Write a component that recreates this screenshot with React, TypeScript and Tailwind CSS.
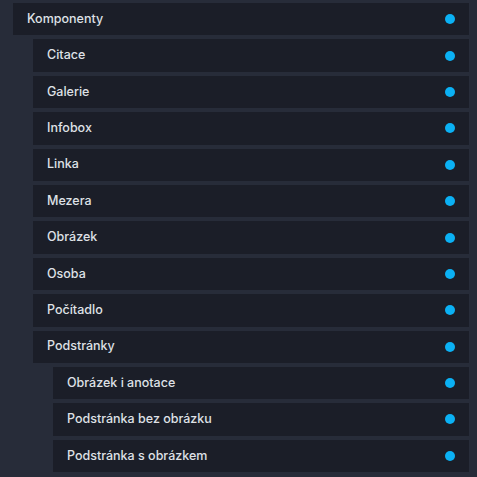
type Node = { label: string; children?: Node[] };

const tree: Node = {
  label: 'Komponenty',
  children: [
    { label: 'Citace' },
    { label: 'Galerie' },
    { label: 'Infobox' },
    { label: 'Linka' },
    { label: 'Mezera' },
    { label: 'Obrázek' },
    { label: 'Osoba' },
    { label: 'Počítadlo' },
    {
      label: 'Podstránky',
      children: [
        { label: 'Obrázek i anotace' },
        { label: 'Podstránka bez obrázku' },
        { label: 'Podstránka s obrázkem' },
      ],
    },
  ],
};

const TreeItem = ({ node }: { node: Node }) => (
  <div className="flex flex-col gap-[4px]">
    <div className="flex h-[32.4px] items-center justify-between bg-[#1b1e28] pl-[14px] pr-[14px]">
      <span className="text-[12.5px] font-medium text-[#dfe1e6]">{node.label}</span>
      <span className="h-[10px] w-[10px] rounded-full bg-[#0bb1f4]" />
    </div>
    {node.children && (
      <div className="flex flex-col gap-[4px] pl-[20px]">
        {node.children.map((child) => (
          <TreeItem key={child.label} node={child} />
        ))}
      </div>
    )}
  </div>
);

export default function App() {
  return (
    <div
      className="h-[477px] w-[477px] overflow-hidden bg-[#272c39] pl-[13px] pr-[8px] pt-[3px]"
      style={{ fontFamily: 'Inter, "Noto Sans", sans-serif' }}
    >
      <TreeItem node={tree} />
    </div>
  );
}
